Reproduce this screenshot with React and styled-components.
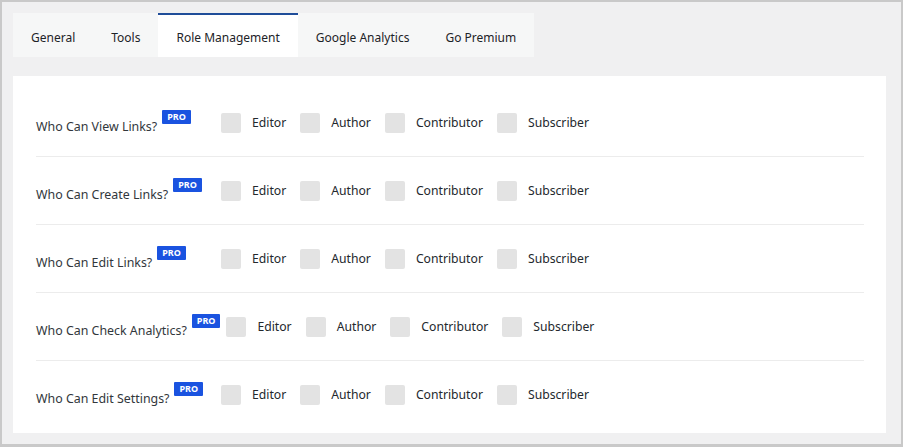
import React from 'react';
import styled, { createGlobalStyle } from 'styled-components';

const GlobalStyle = createGlobalStyle`
    html, body {
        margin: 0;
        padding: 0;
        background: #c9c9c9;
    }
    body {
        font-family: "Noto Sans", "Open Sans", sans-serif;
        -webkit-font-smoothing: antialiased;
    }
`;

const Frame = styled.div`
    box-sizing: border-box;
    width: 903px;
    height: 447px;
    border: 2px solid #c9c9c9;
    border-bottom-width: 3px;
    background: #f0f0f1;
    padding: 11px 15px 0 11px;
`;

const TabBar = styled.nav`
    display: flex;
    width: max-content;
    background: #f6f7f7;
    margin-bottom: 19px;
`;

const Tab = styled.div`
    box-sizing: border-box;
    height: 44px;
    padding: 2px 18px 0;
    display: flex;
    align-items: center;
    font-size: 12px;
    color: #1d2327;
    border-top: 2px solid ${props => (props.active ? '#1f4d99' : 'transparent')};
    background: ${props => (props.active ? '#fff' : 'transparent')};
    cursor: pointer;
`;

const Panel = styled.section`
    background: #fff;
    padding: 13px 22px 4px 23px;
`;

const Row = styled.div`
    box-sizing: border-box;
    display: flex;
    align-items: center;
    height: 68px;
    border-bottom: 1px solid ${props => (props.last ? 'transparent' : '#ececec')};
`;

const Label = styled.div`
    box-sizing: border-box;
    min-width: 185px;
    padding-right: 6px;
    flex-shrink: 0;
    display: flex;
    align-items: flex-start;
    font-size: 12.4px;
    color: #32373c;
`;

const LabelText = styled.span`
    padding-top: 8px;
`;

const Badge = styled.span`
    margin-left: 5px;
    background: #1a53e0;
    color: #fff;
    font-size: 9px;
    font-weight: 700;
    line-height: 14px;
    padding: 0 5px;
    border-radius: 1px;
`;

const Choice = styled.label`
    display: flex;
    align-items: center;
    margin-right: 14px;
    font-size: 12.2px;
    color: #23282d;
    cursor: pointer;
`;

const Box = styled.span`
    width: 20px;
    height: 20px;
    border-radius: 2px;
    background: #e3e3e3;
    margin-right: 11px;
`;

const tabs = ['General', 'Tools', 'Role Management', 'Google Analytics', 'Go Premium'];
const questions = [
    'Who Can View Links?',
    'Who Can Create Links?',
    'Who Can Edit Links?',
    'Who Can Check Analytics?',
    'Who Can Edit Settings?'
];
const roles = ['Editor', 'Author', 'Contributor', 'Subscriber'];

export default function App() {
    return (
        <>
            <GlobalStyle />
            <Frame>
                <TabBar>
                    {tabs.map(tab => (
                        <Tab key={tab} active={tab === 'Role Management'}>{tab}</Tab>
                    ))}
                </TabBar>
                <Panel>
                    {questions.map((q, i) => (
                        <Row key={q} last={i === questions.length - 1}>
                            <Label>
                                <LabelText>{q}</LabelText>
                                <Badge>PRO</Badge>
                            </Label>
                            {roles.map(role => (
                                <Choice key={role}>
                                    <Box />
                                    {role}
                                </Choice>
                            ))}
                        </Row>
                    ))}
                </Panel>
            </Frame>
        </>
    );
}
